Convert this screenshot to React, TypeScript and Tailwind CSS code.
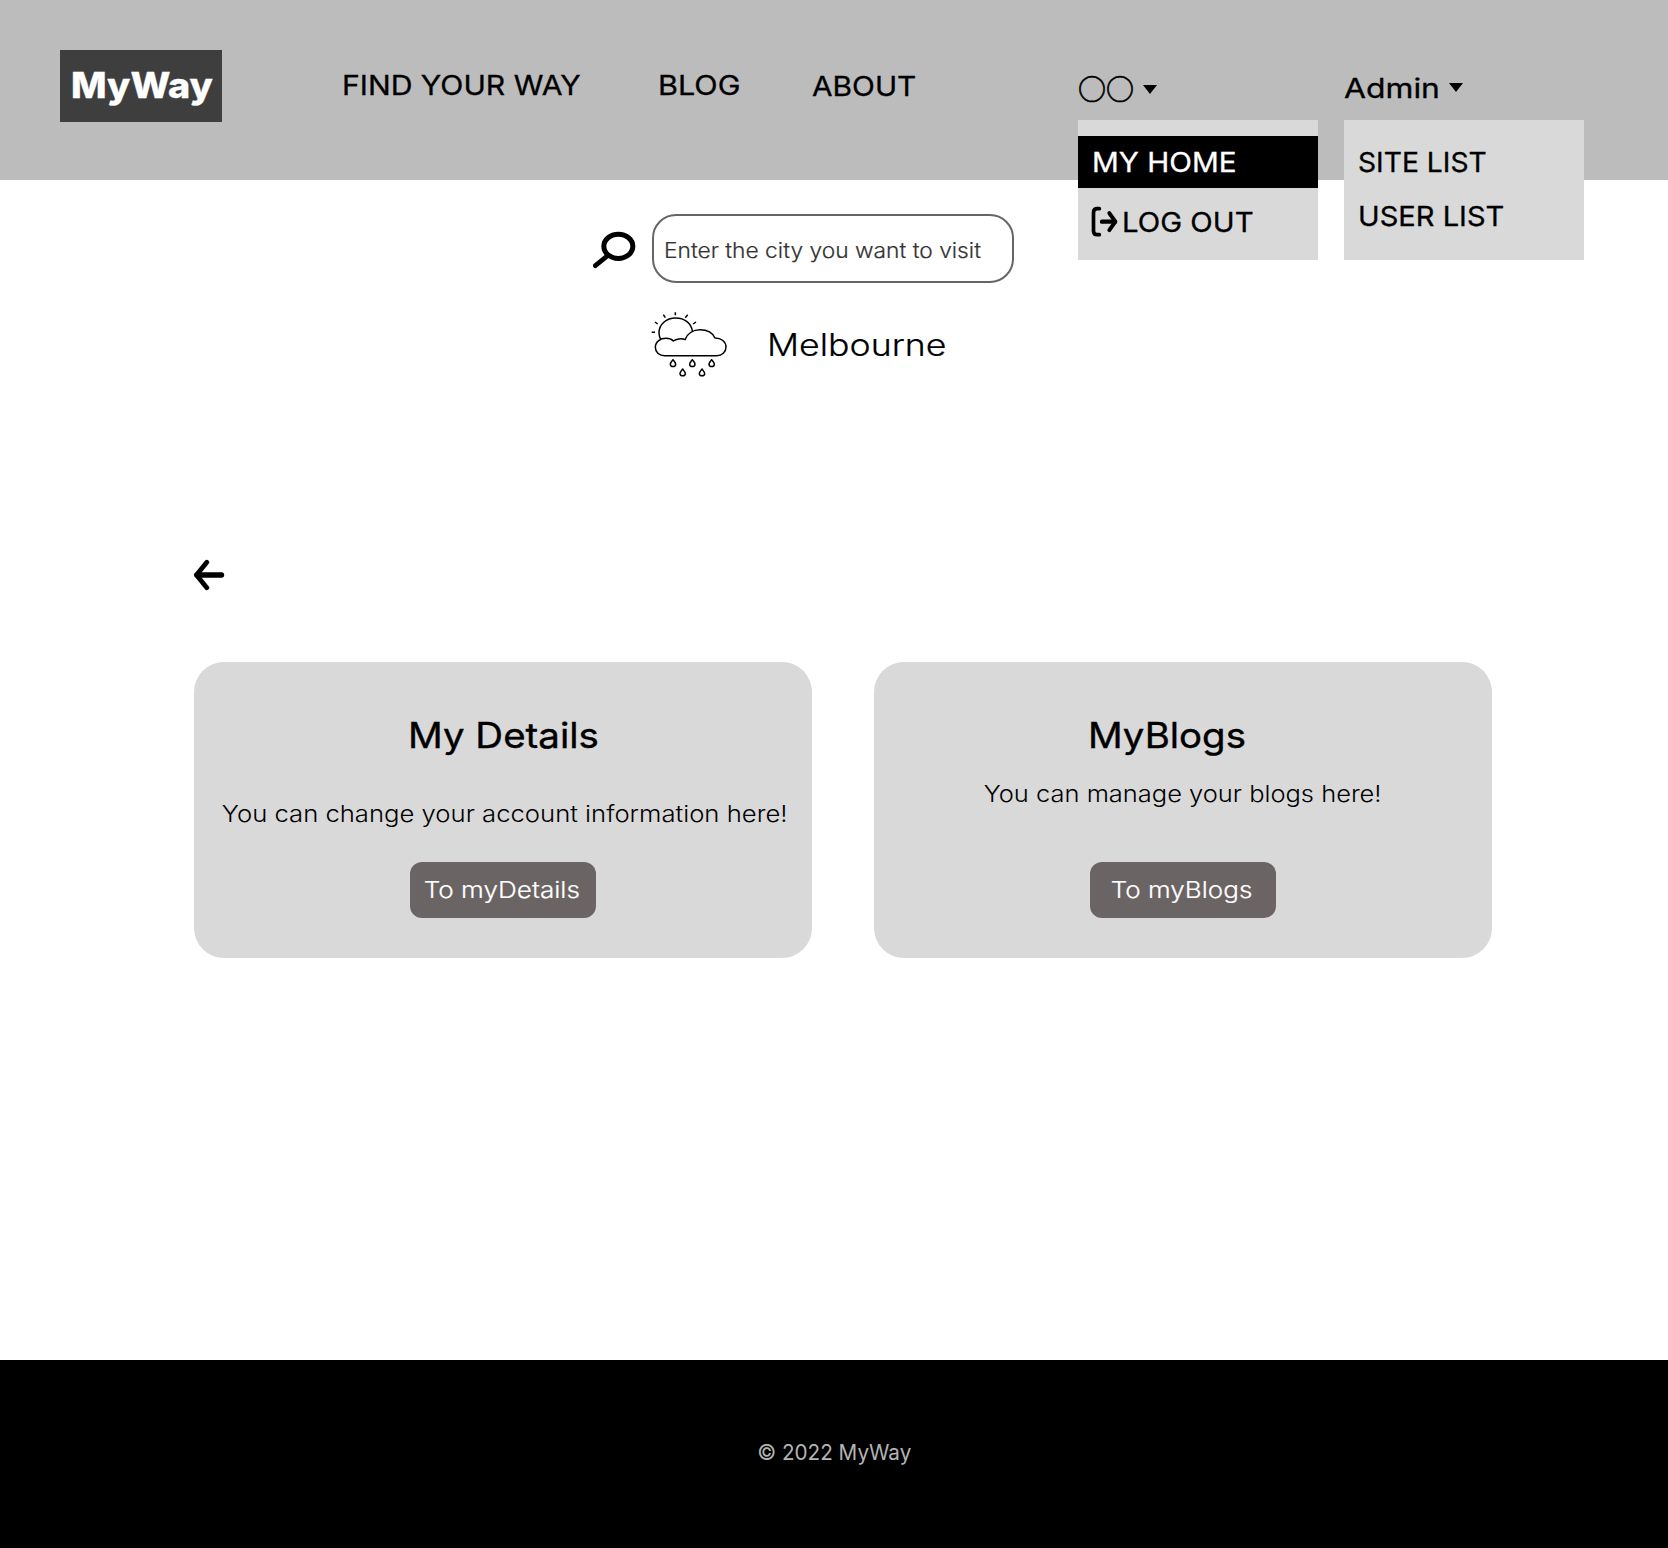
import type { ReactNode } from "react";

function Caret({ className }: { className: string }) {
  return (
    <svg className={className} width="14" height="9" viewBox="0 0 14 9" aria-hidden="true">
      <path d="M0 0H14L7 9Z" fill="black" />
    </svg>
  );
}

function LogOutIcon() {
  return (
    <svg
      width="30"
      height="34"
      viewBox="45 403 90 102"
      fill="none"
      stroke="black"
      strokeLinecap="round"
      strokeLinejoin="round"
      aria-hidden="true"
    >
      <path d="M73 414H67Q55.500 414 55.500 426V480Q55.500 492 67 492H73" strokeWidth="11" />
      <path d="M81 453H120" strokeWidth="13" />
      <path d="M103 427.500L121 453L103 478.500" strokeWidth="12" />
    </svg>
  );
}

function SearchIcon() {
  return (
    <svg className="mt-0.5" width="47" height="40" viewBox="20 25 141 120" fill="none" stroke="black" aria-hidden="true">
      <ellipse cx="99" cy="77" rx="43.500" ry="36.500" strokeWidth="15" />
      <path d="M68 104L30 135" strokeWidth="14" strokeLinecap="round" />
    </svg>
  );
}

const raindrops = [
  [99, 189],
  [157, 189],
  [215, 189],
  [128, 217],
  [186, 217],
];

function WeatherIcon() {
  return (
    <svg
      width="80"
      height="70"
      viewBox="30 30 240 210"
      fill="none"
      stroke="black"
      strokeWidth="4.500"
      strokeLinejoin="round"
      aria-hidden="true"
    >
      <path d="M74 167C57 167 46 156 46 142C46 124 62 115 78 115C88 115 95 118 100 123C108 117 124 114 135 119C142 100 160 89 180 89C204 89 219 100 225 114C244 114 258 125 258 141C258 156 246 167 230 167Z" />
      <path d="M62 118C58 110 57 104 57 98C57 73 79 54 107 54C134 54 154 70 157 93" />
      <path d="M35 97H45M45 66L53 72M70 44L76 53M106 37V46M143 44L136 53M168 66L159 72" />
      {raindrops.map(([x, y]) => (
        <path
          key={`${x}-${y}`}
          transform={`translate(${x} ${y})`}
          d="M0 -10C-4 -4 -8 -1 -8 3.500A8 7 0 0 0 8 3.500C8 -1 4 -4 0 -10Z"
        />
      ))}
    </svg>
  );
}

function BackIcon() {
  return (
    <svg
      width="32"
      height="32"
      viewBox="193 559 32 32"
      fill="none"
      stroke="black"
      strokeLinecap="round"
      strokeLinejoin="round"
      aria-hidden="true"
    >
      <path d="M197 575H221.500" strokeWidth="5.400" />
      <path d="M206.800 562.300L196.500 575L206.800 587.700" strokeWidth="4.800" />
    </svg>
  );
}

function Label({ className, children }: { className: string; children: ReactNode }) {
  return <span className={`inline-block whitespace-nowrap ${className}`}>{children}</span>;
}

function Header() {
  return (
    <header className="flex h-[180px] items-start bg-[#bcbcbc] pl-[60px] text-[27px] leading-7 [-webkit-text-stroke:0.3px_currentColor]">
      <a className="mt-[50px] flex h-[72px] w-[162px] shrink-0 items-center bg-[#3e3e3e] pb-[3px] pl-[10.500px] text-[35px] font-extrabold text-white">
        <Label className="origin-left scale-x-[1.078]">MyWay</Label>
      </a>
      <nav className="ml-[120px] flex shrink-0 pt-[72px]">
        <a className="w-[316px]">
          <Label className="origin-left scale-x-[1.117]">FIND YOUR WAY</Label>
        </a>
        <a className="w-[154px]">
          <Label className="origin-left scale-x-[1.130]">BLOG</Label>
        </a>
        <a className="mt-px w-[266px]">
          <Label className="origin-left scale-x-[1.105]">ABOUT</Label>
        </a>
      </nav>

      <div className="relative mr-[26px] h-[180px] w-[240px] shrink-0">
        <button className="flex pt-[74px]">
          <Label className="w-[56px] font-['Noto_Sans_CJK_KR'] text-[28px] font-medium [-webkit-text-stroke:0.6px_black]">
            ○○
          </Label>
          <Caret className="mt-[11px] ml-[9px]" />
        </button>
        <ul className="absolute top-[120px] left-0 h-[140px] w-full bg-[#d9d9d9] pt-4">
          <li className="flex h-[52px] items-center bg-black pt-0.5 pl-[13.500px] text-white">
            <Label className="origin-left scale-x-[1.098]">MY HOME</Label>
          </li>
          <li className="flex h-[68px] items-center pl-3">
            <LogOutIcon />
            <Label className="mt-0.5 ml-[2px] origin-left scale-x-[1.087]">LOG OUT</Label>
          </li>
        </ul>
      </div>

      <div className="relative h-[180px] w-[240px] shrink-0">
        <button className="flex pt-[75px]">
          <Label className="w-[105px] text-left">
            <Label className="origin-left scale-x-[1.180]">Admin</Label>
          </Label>
          <Caret className="mt-2" />
        </button>
        <ul className="absolute top-[120px] left-0 h-[140px] w-full bg-[#d9d9d9] pt-[17px] pl-[13.500px]">
          <li className="flex h-[52px] items-center">
            <Label className="origin-left scale-x-[1.046]">SITE LIST</Label>
          </li>
          <li className="flex h-[56px] items-center">
            <Label className="origin-left scale-x-[1.077]">USER LIST</Label>
          </li>
        </ul>
      </div>
    </header>
  );
}

function Search() {
  return (
    <section className="pt-[33.500px]">
      <div className="flex h-[69px] items-center pl-[592px]">
        <SearchIcon />
        <div className="ml-[13px] flex h-[69px] w-[362px] items-center rounded-[24px] border-2 border-[#666666] pt-[5px] pl-[10px] text-[21px] leading-7 font-light text-[#333333] [-webkit-text-stroke:0.2px_currentColor]">
          <Label className="origin-left scale-x-[1.084]">Enter the city you want to visit</Label>
        </div>
      </div>
      <div className="mt-[27.500px] flex h-[70px] items-center pl-[650px]">
        <WeatherIcon />
        <Label className="ml-[37px] origin-left scale-x-[1.150] text-[31px] leading-10 font-light [-webkit-text-stroke:0.2px_currentColor]">
          Melbourne
        </Label>
      </div>
    </section>
  );
}

type CardProps = {
  title: ReactNode;
  description: ReactNode;
  action: ReactNode;
};

function Card({ title, description, action }: CardProps) {
  return (
    <article className="h-[296px] w-[618px] rounded-[30px] bg-[#d9d9d9] pt-[51px]">
      <h2 className="pl-[214px] text-[35px] leading-[44px] [-webkit-text-stroke:0.4px_currentColor]">{title}</h2>
      <div className="flex h-[105px] justify-center text-[23px] leading-8 font-light">{description}</div>
      <button className="mx-auto flex h-14 w-[186px] items-center justify-center rounded-xl bg-[#6b6464] pr-[3px] text-[23px] leading-8 font-light text-white [-webkit-text-stroke:0.2px_currentColor]">
        {action}
      </button>
    </article>
  );
}

export default function App() {
  return (
    <div className="flex h-[1548px] w-[1668px] flex-col overflow-hidden bg-white font-['Inter','Liberation_Sans',sans-serif] text-black">
      <Header />
      <main className="flex-1">
        <Search />
        <a className="mt-[179px] ml-[193px] block w-8">
          <BackIcon />
        </a>
        <div className="mt-[71px] flex gap-[62px] pl-[194px]">
          <Card
            title={<Label className="origin-left scale-x-[1.099]">My Details</Label>}
            description={
              <Label className="mt-[41px] ml-[3px] scale-x-[1.115]">
                You can change your account information here!
              </Label>
            }
            action={<Label className="scale-x-[1.135]">To myDetails</Label>}
          />
          <Card
            title={<Label className="origin-left scale-x-[1.097]">MyBlogs</Label>}
            description={<Label className="mt-[21px] scale-x-[1.107]">You can manage your blogs here!</Label>}
            action={<Label className="scale-x-[1.130]">To myBlogs</Label>}
          />
        </div>
      </main>
      <footer className="flex h-[188px] items-center justify-center bg-black pb-[3px] text-[21px] leading-7 text-[#b4b4b4]">
        <Label className="scale-x-[0.985]">© 2022 MyWay</Label>
      </footer>
    </div>
  );
}
